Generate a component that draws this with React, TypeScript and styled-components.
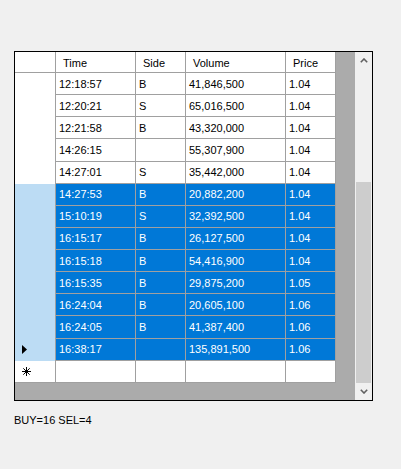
import styled, { createGlobalStyle } from 'styled-components'

const GlobalStyle = createGlobalStyle`
    body {
        margin: 0;
        background: #f0f0f0;
        font-family: "Liberation Sans", Arial, sans-serif;
        font-size: 11px;
        color: #000;
    }
`

type Trade = {
    time: string
    side: string
    volume: string
    price: string
    selected?: boolean
    current?: boolean
}

const trades: Trade[] = [
    { time: '12:18:57', side: 'B', volume: '41,846,500', price: '1.04' },
    { time: '12:20:21', side: 'S', volume: '65,016,500', price: '1.04' },
    { time: '12:21:58', side: 'B', volume: '43,320,000', price: '1.04' },
    { time: '14:26:15', side: '', volume: '55,307,900', price: '1.04' },
    { time: '14:27:01', side: 'S', volume: '35,442,000', price: '1.04' },
    { time: '14:27:53', side: 'B', volume: '20,882,200', price: '1.04', selected: true },
    { time: '15:10:19', side: 'S', volume: '32,392,500', price: '1.04', selected: true },
    { time: '16:15:17', side: 'B', volume: '26,127,500', price: '1.04', selected: true },
    { time: '16:15:18', side: 'B', volume: '54,416,900', price: '1.04', selected: true },
    { time: '16:15:35', side: 'B', volume: '29,875,200', price: '1.05', selected: true },
    { time: '16:24:04', side: 'B', volume: '20,605,100', price: '1.06', selected: true },
    { time: '16:24:05', side: 'B', volume: '41,387,400', price: '1.06', selected: true },
    { time: '16:38:17', side: '', volume: '135,891,500', price: '1.06', selected: true, current: true },
]

const columns = [
    { key: 'time', title: 'Time', width: 80 },
    { key: 'side', title: 'Side', width: 50 },
    { key: 'volume', title: 'Volume', width: 100 },
    { key: 'price', title: 'Price', width: 50 },
] as const

const CurrentArrow = () => (
    <svg width="5" height="9" viewBox="0 0 5 9">
        <polygon points="0,0 5,4.5 0,9" fill="#000" />
    </svg>
)

const NewRowStar = () => (
    <svg width="9" height="9" viewBox="0 0 9 9" stroke="#000" strokeWidth="1">
        <line x1="4.5" y1="0" x2="4.5" y2="9" />
        <line x1="0" y1="4.5" x2="9" y2="4.5" />
        <line x1="1.3" y1="1.3" x2="7.7" y2="7.7" />
        <line x1="7.7" y1="1.3" x2="1.3" y2="7.7" />
    </svg>
)

const Chevron = ({ down }: { down?: boolean }) => (
    <svg width="8" height="5" viewBox="0 0 8 5">
        <polyline
            points={down ? '0.8,0.8 4,4 7.2,0.8' : '0.8,4.2 4,1 7.2,4.2'}
            fill="none"
            stroke="#606060"
            strokeWidth="1.6"
        />
    </svg>
)

const App = () => {
    return (
        <Form>
            <GlobalStyle />
            <GridFrame>
                <Viewport>
                    <HeaderRow>
                        <CornerCell />
                        {columns.map((col) => (
                            <HeaderCell key={col.key} $width={col.width}>{col.title}</HeaderCell>
                        ))}
                    </HeaderRow>
                    {trades.map((t) => (
                        <Row key={t.time}>
                            <RowHeader $selected={t.selected}>
                                {t.current && <CurrentArrow />}
                            </RowHeader>
                            {columns.map((col) => (
                                <Cell key={col.key} $width={col.width} $selected={t.selected}>
                                    {t[col.key]}
                                </Cell>
                            ))}
                        </Row>
                    ))}
                    <Row>
                        <RowHeader $last>
                            <NewRowStar />
                        </RowHeader>
                        {columns.map((col) => (
                            <Cell key={col.key} $width={col.width} />
                        ))}
                    </Row>
                </Viewport>
                <ScrollBar>
                    <ScrollButton><Chevron /></ScrollButton>
                    <ScrollTrack>
                        <ScrollThumb />
                    </ScrollTrack>
                    <ScrollButton><Chevron down /></ScrollButton>
                </ScrollBar>
            </GridFrame>
            <Summary>BUY=16 SEL=4</Summary>
        </Form>
    )
}

const Form = styled.div`
    padding: 51px 0 0 14px;
`

const GridFrame = styled.div`
    display: flex;
    box-sizing: border-box;
    width: 359px;
    height: 350px;
    border: 1px solid #000;
`

const Viewport = styled.div`
    flex: 1;
    background: #ababab;
    overflow: hidden;
`

const HeaderRow = styled.div`
    display: flex;
    width: 321px;
    height: 21px;
`

const Row = styled.div`
    display: flex;
    width: 321px;
    height: 22.14px;
`

const BaseCell = styled.div<{ $width?: number }>`
    box-sizing: border-box;
    display: flex;
    align-items: center;
    width: ${(p) => p.$width ?? 41}px;
    flex-shrink: 0;
    border-right: 1px solid #a0a0a0;
    white-space: nowrap;
`

const CornerCell = styled(BaseCell)`
    background: #fff;
    border-bottom: 1px solid #a0a0a0;
`

const HeaderCell = styled(BaseCell)`
    background: #fff;
    border-bottom: 1px solid #a0a0a0;
    padding: 1px 0 0 7px;
`

const RowHeader = styled(BaseCell)<{ $selected?: boolean; $last?: boolean }>`
    background: ${(p) => (p.$selected ? '#bcdcf4' : '#fff')};
    border-bottom: ${(p) => (p.$last ? '1px solid #a0a0a0' : 'none')};
    padding-left: 7px;
`

const Cell = styled(BaseCell)<{ $selected?: boolean }>`
    background: ${(p) => (p.$selected ? '#0078d7' : '#fff')};
    color: ${(p) => (p.$selected ? '#fff' : '#000')};
    border-bottom: 1px solid #a0a0a0;
    padding-left: 3px;
`

const ScrollBar = styled.div`
    display: flex;
    flex-direction: column;
    width: 17px;
    background: #f0f0f0;
`

const ScrollButton = styled.div`
    display: flex;
    align-items: center;
    justify-content: center;
    height: 17px;
    flex-shrink: 0;
`

const ScrollTrack = styled.div`
    flex: 1;
    display: flex;
    flex-direction: column;
    justify-content: flex-end;
`

const ScrollThumb = styled.div`
    height: 201px;
    margin: 0 1px;
    background: #cdcdcd;
`

const Summary = styled.div`
    margin-top: 13px;
    line-height: 13px;
`

export default App
